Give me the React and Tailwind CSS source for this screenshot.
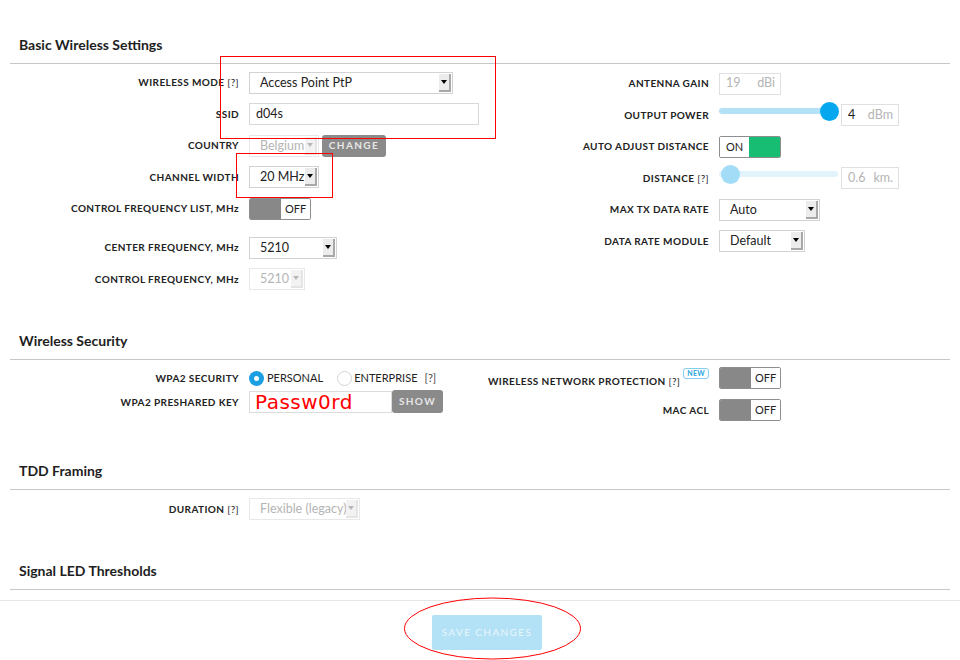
import React from 'react';

const Label = ({ children }) => (
  <div className="w-[229px] shrink-0 whitespace-nowrap text-right text-[10px] font-bold uppercase tracking-[0.4px] text-[#222]">
    {children}
  </div>
);

const Q = () => <span className="font-normal">[?]</span>;

const Row = ({ label, children, className = 'h-[31.5px]' }) => (
  <div className={`flex items-center ${className}`}>
    <Label>{label}</Label>
    <div className="ml-[10px] flex items-center">{children}</div>
  </div>
);

const Select = ({ value, width, disabled }) => (
  <div
    className={`relative h-[22px] ${width} overflow-hidden whitespace-nowrap border bg-white pl-[10px] text-[12.5px] leading-[20px] ${
      disabled ? 'border-[#e8e8e8] text-[#b4b4b4]' : 'border-[#d2d2d2] text-[#222]'
    }`}
  >
    {value}
    <span
      className={`absolute right-[1px] top-[1px] bottom-[1px] flex w-[12px] items-center justify-center ${
        disabled ? 'bg-[#f2f2f2] border-r-2 border-b-2 border-[#e4e4e4]' : 'bg-[#ececec] border-r-2 border-b-2 border-[#a8a8a8]'
      }`}
    >
      <span
        className={`h-0 w-0 border-x-[3px] border-x-transparent border-t-[4px] ${
          disabled ? 'border-t-[#b8b8b8]' : 'border-t-black'
        }`}
      />
    </span>
  </div>
);

const UnitInput = ({ value, unit, width, dim }) => (
  <div
    className={`flex h-[22px] ${width} items-center justify-between border border-[#e0e0e0] bg-white pl-[6px] pr-[5px] text-[12.5px]`}
  >
    <span className={dim ? 'text-[#b4b4b4]' : 'text-[#222]'}>{value}</span>
    <span className="text-[#b4b4b4]">{unit}</span>
  </div>
);

const Toggle = ({ on }) =>
  on ? (
    <div className="flex h-[22px] w-[62px] overflow-hidden rounded-[2px] border border-[#8e8e8e]">
      <div className="flex w-[29px] items-center justify-center bg-white text-[11px] text-[#222]">ON</div>
      <div className="flex-1 bg-[#17bd73]" />
    </div>
  ) : (
    <div className="flex h-[22px] w-[62px] overflow-hidden rounded-[2px] border border-[#8e8e8e]">
      <div className="w-[31px] bg-[#888]" />
      <div className="flex flex-1 items-center justify-center bg-white text-[11px] text-[#222]">OFF</div>
    </div>
  );

const Slider = ({ knobLeft, track, knob }) => (
  <div className="relative -mt-[8px] h-[19px] w-[120px]">
    <div className={`absolute left-0 right-[1px] top-[6.5px] h-[6px] rounded-full ${track}`} />
    <div className={`absolute top-0 h-[19px] w-[19px] rounded-full ${knob} ${knobLeft}`} />
  </div>
);

const GreyButton = ({ children, className }) => (
  <div
    className={`flex items-center justify-center rounded-[3px] bg-[#8a8a8a] text-[10px] font-bold tracking-[1.4px] text-[#e6e6e6] ${className}`}
  >
    {children}
  </div>
);

const SectionHeader = ({ title }) => (
  <div className="mx-[10px] border-b border-[#c8c8c8] pb-[8px] pl-[9px] text-[14px] font-bold leading-[20px] text-[#1e1e1e]">
    {title}
  </div>
);

const App = () => {
  return (
    <div className="relative h-[660px] w-[960px] overflow-hidden bg-white pt-[35px] font-[Lato,sans-serif] text-[#222]">
      <SectionHeader title="Basic Wireless Settings" />
      <div className="mx-[10px] grid h-[267px] grid-cols-2">
        <div className="pt-[3px]">
          <Row label={<>Wireless Mode <Q /></>}>
            <Select value="Access Point PtP" width="w-[204px]" />
          </Row>
          <Row label="SSID">
            <div className="flex h-[22px] w-[230px] items-center border border-[#d8d8d8] bg-white pl-[6px] text-[12.5px]">d04s</div>
          </Row>
          <Row label="Country">
            <Select value="Belgium" width="w-[70px]" disabled />
            <GreyButton className="ml-[3px] h-[22px] w-[64px]">CHANGE</GreyButton>
          </Row>
          <Row label="Channel Width">
            <Select value="20 MHz" width="w-[70px]" />
          </Row>
          <Row label={<>Control Frequency List, M<span className="normal-case">Hz</span></>}>
            <Toggle />
          </Row>
          <div className="h-[7.5px]" />
          <Row label={<>Center Frequency, M<span className="normal-case">Hz</span></>}>
            <Select value="5210" width="w-[88px]" />
          </Row>
          <Row label={<>Control Frequency, M<span className="normal-case">Hz</span></>}>
            <Select value="5210" width="w-[56px]" disabled />
          </Row>
        </div>
        <div className="pt-[4px]">
          <Row label="Antenna Gain">
            <UnitInput value="19" unit="dBi" width="w-[62px]" dim />
          </Row>
          <Row label="Output Power">
            <Slider knobLeft="left-[101px]" track="bg-[#b3e1f6]" knob="bg-[#05a8ef]" />
            <div className="ml-[2px]">
              <UnitInput value="4" unit="dBm" width="w-[58px]" />
            </div>
          </Row>
          <Row label="Auto Adjust Distance">
            <Toggle on />
          </Row>
          <Row label={<>Distance <Q /></>}>
            <Slider knobLeft="left-[2px]" track="bg-[#e2f3fc]" knob="bg-[#a3dcf7]" />
            <div className="ml-[2px]">
              <UnitInput value="0.6" unit="km." width="w-[58px]" dim />
            </div>
          </Row>
          <Row label="Max TX Data Rate">
            <Select value="Auto" width="w-[101px]" />
          </Row>
          <Row label="Data Rate Module">
            <Select value="Default" width="w-[86px]" />
          </Row>
        </div>
      </div>

      <SectionHeader title="Wireless Security" />
      <div className="mx-[10px] grid h-[101px] grid-cols-2">
        <div className="pt-[7px]">
          <Row label="WPA2 Security" className="h-[22px]">
            <div className="flex items-center text-[11px] text-[#222]">
              <span className="flex h-[15px] w-[15px] items-center justify-center rounded-full bg-[#1a9fe2]">
                <span className="h-[5px] w-[5px] rounded-full bg-white" />
              </span>
              <span className="ml-[3px]">PERSONAL</span>
              <span className="ml-[14px] h-[15px] w-[15px] rounded-full border border-[#d4d4d4] bg-white" />
              <span className="ml-[2px]">ENTERPRISE</span>
              <span className="ml-[7px] text-[#444]">[?]</span>
            </div>
          </Row>
          <Row label="WPA2 Preshared Key" className="mt-[2px] h-[22px]">
            <div className="flex h-[22px] w-[143px] items-center border border-[#dcdcdc] bg-white pl-[5px] font-['DejaVu_Sans',sans-serif] text-[20px] leading-none tracking-[0.5px] text-[#ff0000]">
              Passw0rd
            </div>
            <GreyButton className="-mt-[1px] h-[23px] w-[51px]">SHOW</GreyButton>
          </Row>
        </div>
        <div className="pt-[7px]">
          <Row
            label={
              <span className="inline-flex items-start">
                <span className="mt-[6px]">Wireless Network Protection <Q /></span>
                <span className="ml-[3px] rounded-[3px] border border-[#85cef0] px-[3px] text-[7px] leading-[9px] tracking-[0.3px] text-[#2aa7e1]">
                  NEW
                </span>
              </span>
            }
            className="h-[22px]"
          >
            <Toggle />
          </Row>
          <Row label="MAC ACL" className="mt-[10px] h-[22px]">
            <Toggle />
          </Row>
        </div>
      </div>

      <SectionHeader title="TDD Framing" />
      <div className="mx-[10px] h-[71px] pt-[8px]">
        <Row label={<>Duration <Q /></>} className="h-[22px]">
          <Select value="Flexible (legacy)" width="w-[111px]" disabled />
        </Row>
      </div>

      <SectionHeader title="Signal LED Thresholds" />
      <div className="mt-[10px] border-t border-[#e6e6e6] pl-[432px] pt-[14px]">
        <div className="flex h-[35px] w-[110px] items-center justify-center rounded-[2px] bg-[#b3e1f5] text-[10px] tracking-[1.4px] text-[#eaf7fd]">
          SAVE CHANGES
        </div>
      </div>

      <svg className="pointer-events-none absolute inset-0" width="960" height="660">
        <rect x="220.5" y="56.5" width="275" height="82" fill="none" stroke="#ff0000" strokeWidth="1" />
        <rect x="236.5" y="153.5" width="96" height="44" fill="none" stroke="#ff0000" strokeWidth="1" />
        <ellipse cx="492.5" cy="628.5" rx="88" ry="30.5" fill="none" stroke="#ff0000" strokeWidth="1" />
      </svg>
    </div>
  );
};

export default App;
